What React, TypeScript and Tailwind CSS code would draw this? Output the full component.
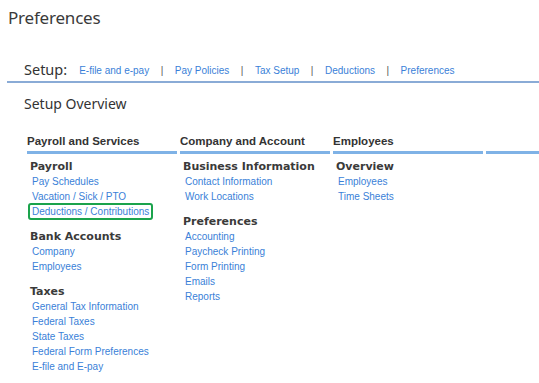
import React from "react";

const arial = { fontFamily: '"Liberation Sans", Arial, sans-serif' } as const;

type Section = { title: string; links: string[] };
type Column = { header: string; sections: Section[] };

const columns: Column[] = [
  {
    header: "Payroll and Services",
    sections: [
      { title: "Payroll", links: ["Pay Schedules", "Vacation / Sick / PTO", "Deductions / Contributions"] },
      { title: "Bank Accounts", links: ["Company", "Employees"] },
      {
        title: "Taxes",
        links: ["General Tax Information", "Federal Taxes", "State Taxes", "Federal Form Preferences", "E-file and E-pay"],
      },
    ],
  },
  {
    header: "Company and Account",
    sections: [
      { title: "Business Information", links: ["Contact Information", "Work Locations"] },
      { title: "Preferences", links: ["Accounting", "Paycheck Printing", "Form Printing", "Emails", "Reports"] },
    ],
  },
  {
    header: "Employees",
    sections: [{ title: "Overview", links: ["Employees", "Time Sheets"] }],
  },
  { header: "", sections: [] },
];

const setupLinks = ["E-file and e-pay", "Pay Policies", "Tax Setup", "Deductions", "Preferences"];

export default function App() {
  return (
    <div className="w-[539px] h-[383px] bg-white overflow-hidden text-[#333]">
      <div
        className="pl-[8px] h-[38px] leading-[36px] text-[17px] tracking-[-0.2px] text-[#3a3a3a]"
        style={{ fontFamily: '"Noto Sans", sans-serif' }}
      >
        Preferences
      </div>
      <div className="ml-[7px] mt-[21px] h-[24px] border-b-2 border-[#8aabd6] pl-[17px] flex items-center">
        <span className="text-[14.5px] text-[#333] mr-[12px]" style={{ fontFamily: '"Noto Sans", sans-serif' }}>
          Setup:
        </span>
        {setupLinks.map((l, i) => (
          <React.Fragment key={l}>
            {i > 0 && (
              <span className="text-[10px] text-[#555] px-[11.5px]" style={arial}>
                |
              </span>
            )}
            <a className="text-[10px] text-[#3a7fd8]" style={arial}>
              {l}
            </a>
          </React.Fragment>
        ))}
      </div>
      <div
        className="pl-[24px] mt-[12px] h-[18px] leading-[18px] text-[14px] text-[#333]"
        style={{ fontFamily: '"Noto Sans", sans-serif' }}
      >
        Setup Overview
      </div>
      <div className="flex gap-[3px] pl-[27px] mt-[18px]">
        {columns.map((c, ci) => (
          <div key={ci} className="w-[150px] shrink-0">
            <div className="h-[20px] leading-[20px] text-[11.5px] font-bold text-[#333] whitespace-nowrap" style={arial}>
              {c.header}
            </div>
            <div className="h-[3px] bg-[#7fb2e6]" />
            <div className="pt-[5px] flex flex-col gap-[10px]">
              {c.sections.map((s) => (
                <div key={s.title}>
                  <div
                    className="pl-[3px] h-[15px] leading-[15px] text-[11px] font-bold text-[#3a3a3a] whitespace-nowrap"
                    style={{ fontFamily: '"DejaVu Sans", Verdana, sans-serif' }}
                  >
                    {s.title}
                  </div>
                  <div className="pl-[5px] flex flex-col">
                    {s.links.map((l) => (
                      <div key={l} className="h-[15px] leading-[15px] text-[10px] flex items-center" style={arial}>
                        <a className="relative text-[#3a7fd8] whitespace-nowrap leading-[15px]">
                          {l}
                          {l === "Deductions / Contributions" && (
                            <span className="absolute left-[-4px] right-[-4px] top-[-1px] bottom-[-1px] border-2 border-[#1ba34c] rounded-[3px]" />
                          )}
                        </a>
                      </div>
                    ))}
                  </div>
                </div>
              ))}
            </div>
          </div>
        ))}
      </div>
    </div>
  );
}
